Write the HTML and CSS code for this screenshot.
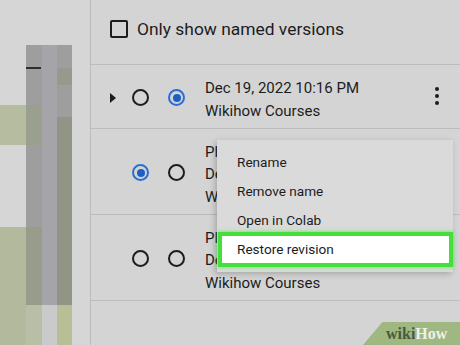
FILE: index.html
```html
<!DOCTYPE html>
<html lang="en">
<head>
    <meta charset="UTF-8">
    <meta name="viewport" content="width=device-width, initial-scale=1.0">
    <title>Revision history</title>
    <link rel="stylesheet" href="styles.css">
</head>
<body>
    <div class="page">
        <div class="backdrop">
            <svg width="90" height="345" viewBox="0 0 90 345">
                <rect x="0" y="0" width="90" height="345" fill="#d6d6d6"/>
                <rect x="0" y="105" width="40" height="40" fill="#b5bc9f"/>
                <rect x="0" y="227" width="40" height="118" fill="#b2b99c"/>
                <rect x="26" y="45" width="46" height="260" fill="#9e9e9e"/>
                <rect x="26" y="105" width="16" height="40" fill="#9aa08e"/>
                <rect x="26" y="227" width="16" height="78" fill="#979c8b"/>
                <rect x="42" y="45" width="15" height="260" fill="#a5a5a9"/>
                <rect x="57" y="117" width="15" height="188" fill="#909585"/>
                <rect x="57" y="68" width="15" height="17" rx="3" fill="#959a8c"/>
                <rect x="26" y="67" width="15" height="2" fill="#2e2e2e"/>
                <rect x="26" y="305" width="16" height="40" fill="#b9bfa6"/>
                <rect x="42" y="305" width="15" height="40" fill="#cacaca"/>
                <rect x="57" y="305" width="15" height="40" fill="#b8be96"/>
            </svg>
        </div>

        <div class="panel">
            <div class="filter">
                <span class="checkbox"></span>
                <span>Only show named versions</span>
            </div>

            <div class="revision">
                <span class="expander open"></span>
                <span class="radio"></span>
                <span class="radio checked"></span>
                <div class="details">
                    <div>Dec 19, 2022 10:16 PM</div>
                    <div>Wikihow Courses</div>
                </div>
                <span class="kebab"><i></i><i></i><i></i></span>
            </div>

            <div class="revision tall">
                <span class="expander"></span>
                <span class="radio checked"></span>
                <span class="radio"></span>
                <div class="details">
                    <div>Plots</div>
                    <div>Dec 19, 2022 10:12 PM</div>
                    <div>Wikihow Courses</div>
                </div>
            </div>

            <div class="revision tall">
                <span class="expander"></span>
                <span class="radio"></span>
                <span class="radio"></span>
                <div class="details">
                    <div>Plots draft</div>
                    <div>Dec 19, 2022 10:05 PM</div>
                    <div>Wikihow Courses</div>
                </div>
            </div>

            <ul class="menu">
                <li>Rename</li>
                <li>Remove name</li>
                <li>Open in Colab</li>
                <li class="highlight">Restore revision</li>
            </ul>

            <div class="watermark"><b>wiki</b>How</div>
        </div>
    </div>
</body>
</html>
```

FILE: styles.css
```css
body {
    margin: 0;
    font-family: Roboto, 'Liberation Sans', Arial, sans-serif;
    color: #1c1c1c;
    background: #d4d4d4;
}
.page {
    display: flex;
    width: 460px;
    height: 345px;
    overflow: hidden;
}
.backdrop {
    width: 90px;
    flex: none;
}
.backdrop svg {
    display: block;
}
.panel {
    position: relative;
    flex: 1;
    border-left: 1px solid #bbbbbb;
    background: #d4d4d4;
}
.filter {
    display: flex;
    align-items: flex-start;
    gap: 9px;
    height: 65px;
    box-sizing: border-box;
    padding: 20px 0 0 19px;
    font-size: 17.4px;
    line-height: 19px;
    border-bottom: 1px solid #bcbcbc;
}
.checkbox {
    width: 14px;
    height: 14px;
    border: 2px solid #1c1c1c;
    border-radius: 2px;
}
.revision {
    display: flex;
    align-items: center;
    height: 64px;
    box-sizing: border-box;
    padding: 2px 0 0 17px;
    border-bottom: 1px solid #bcbcbc;
    font-size: 15px;
}
.revision.tall {
    height: 86px;
}
.expander {
    width: 24px;
    flex: none;
}
.expander.open::before {
    content: "";
    display: block;
    margin: 0 0 0 2px;
    width: 0;
    height: 0;
    border-top: 5px solid transparent;
    border-bottom: 5px solid transparent;
    border-left: 6px solid #1c1c1c;
}
.radio {
    flex: none;
    width: 13px;
    height: 13px;
    border: 2px solid #1c1c1c;
    border-radius: 50%;
    margin-right: 19px;
    display: flex;
    align-items: center;
    justify-content: center;
}
.radio.checked {
    border-color: #2a6fd6;
}
.radio.checked::before {
    content: "";
    width: 8px;
    height: 8px;
    border-radius: 50%;
    background: #1f5fc2;
}
.details {
    flex: 1;
    line-height: 23px;
    margin: 5px 0 0 1px;
}
.tall .details {
    line-height: 22.5px;
    margin-top: 4px;
}
.kebab {
    display: flex;
    flex-direction: column;
    gap: 3px;
    width: 4px;
    margin: -3px 21px 0 0;
}
.kebab i {
    width: 4px;
    height: 4px;
    border-radius: 50%;
    background: #1c1c1c;
}
.menu {
    position: absolute;
    left: 126px;
    top: 140px;
    width: 236px;
    margin: 0;
    padding: 8px 0;
    list-style: none;
    background: #dadada;
    box-shadow: -2px 2px 6px rgba(0, 0, 0, 0.22);
    font-size: 13.6px;
}
.menu li {
    height: 29px;
    line-height: 29px;
    padding-left: 20px;
}
.menu li.highlight {
    margin: -3px 0 -3px 1px;
    height: 27px;
    line-height: 27px;
    padding-left: 15px;
    background: #ffffff;
    border: 4px solid #45df3a;
    box-shadow: 0 0 4px rgba(70, 230, 60, 0.8);
}
.watermark {
    position: absolute;
    right: 0;
    bottom: 0;
    width: 97px;
    height: 23px;
    box-sizing: border-box;
    padding: 2px 0 0 23px;
    background: #9fb781;
    clip-path: polygon(20% 0, 100% 0, 100% 100%, 0 100%);
    font-family: 'Liberation Serif', 'Times New Roman', serif;
    font-weight: bold;
    font-size: 16px;
    line-height: 20px;
    color: #eef2e8;
}
.watermark b {
    color: #485a3b;
}
```
